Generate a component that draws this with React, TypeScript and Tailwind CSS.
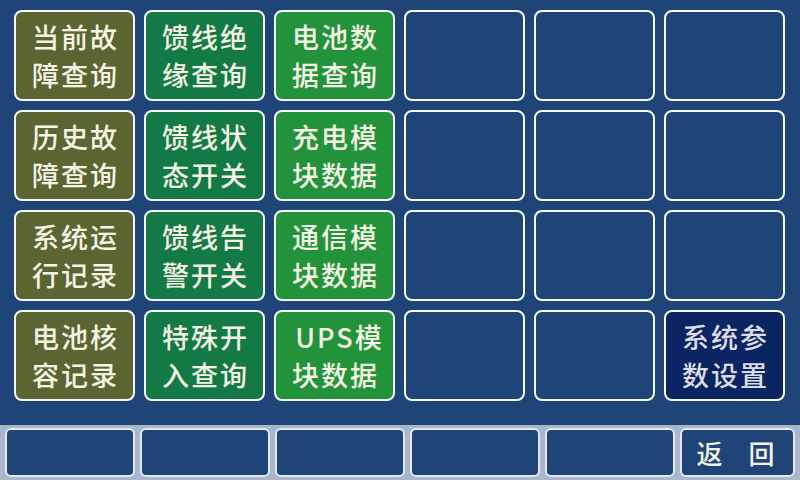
import React from "react";

type Btn = { lines: string[]; bg?: string };

const olive = "bg-[#5b6531]";
const dgreen = "bg-[#147a45]";
const lgreen = "bg-[#23933b]";

const rows: Btn[][] = [
  [
    { lines: ["当前故", "障查询"], bg: olive },
    { lines: ["馈线绝", "缘查询"], bg: dgreen },
    { lines: ["电池数", "据查询"], bg: lgreen },
    { lines: [] },
    { lines: [] },
    { lines: [] },
  ],
  [
    { lines: ["历史故", "障查询"], bg: olive },
    { lines: ["馈线状", "态开关"], bg: dgreen },
    { lines: ["充电模", "块数据"], bg: lgreen },
    { lines: [] },
    { lines: [] },
    { lines: [] },
  ],
  [
    { lines: ["系统运", "行记录"], bg: olive },
    { lines: ["馈线告", "警开关"], bg: dgreen },
    { lines: ["通信模", "块数据"], bg: lgreen },
    { lines: [] },
    { lines: [] },
    { lines: [] },
  ],
  [
    { lines: ["电池核", "容记录"], bg: olive },
    { lines: ["特殊开", "入查询"], bg: dgreen },
    { lines: ["\u00a0UPS模", "块数据"], bg: lgreen },
    { lines: [] },
    { lines: [] },
    { lines: ["系统参", "数设置"], bg: "bg-[#0b2462]" },
  ],
];

export default function App() {
  const font = {
    fontFamily: '"Noto Sans CJK SC", "Liberation Serif", serif',
  };
  return (
    <div className="w-[800px] h-[480px] bg-[#1e4478] flex flex-col overflow-hidden" style={font}>
      <div className="pl-[14px] pt-[10px] grid grid-cols-[repeat(6,121px)] grid-rows-[repeat(4,91px)] gap-[9px]">
        {rows.flat().map((b, i) => (
          <div
            key={i}
            className={`rounded-[8px] border-2 border-[#f8f8f4] flex flex-col items-center justify-center ${b.bg ?? "bg-[#1e4478]"}`}
          >
            {b.lines.map((l, j) => (
              <div
                key={j}
                className={`text-[27px] leading-[38px] tracking-[2px] pl-[2px] font-medium ${b.bg === "bg-[#0b2462]" ? "text-[#dcdce6]" : "text-[#f5f3e4]"}`}
              >
                {l}
              </div>
            ))}
          </div>
        ))}
      </div>
      <div className="mt-auto h-[55px] bg-[#aab7cb] flex items-center pl-[5px] pr-[5px] gap-[5px] pt-[3px] pb-[3px]">
        {[0, 1, 2, 3, 4].map((i) => (
          <div
            key={i}
            className="w-[130px] h-full rounded-[6px] border-2 border-[#e2e9f3] bg-[#1e4478]"
          />
        ))}
        <div className="w-[115px] h-full rounded-[6px] border-2 border-[#e2e9f3] bg-[#1e4478] flex items-center justify-center gap-[26px] pr-[4px] text-[26px] font-medium text-[#f5f3e4]">
          <span>返</span>
          <span>回</span>
        </div>
      </div>
    </div>
  );
}
